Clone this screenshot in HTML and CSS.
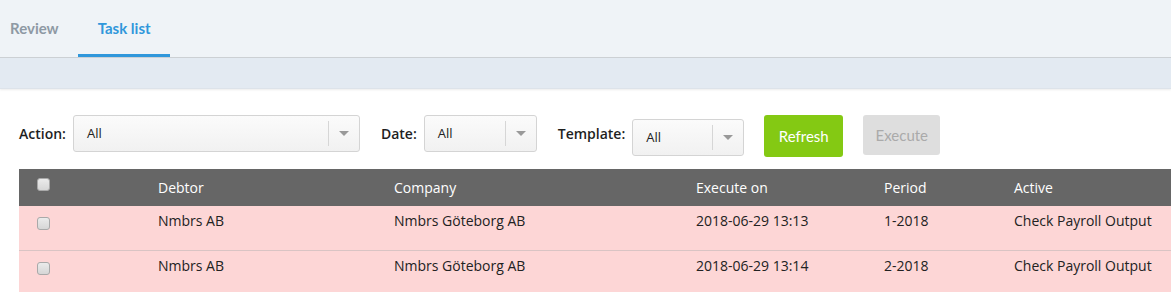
FILE: index.html
```html
<!DOCTYPE html>
<html>
<head>
<meta charset="utf-8">
<link rel="stylesheet" href="styles.css">
</head>
<body>
<div class="tabs">
  <div class="tab">Review</div>
  <div class="tab active">Task list</div>
</div>
<div class="band"></div>
<div class="content">
  <div class="filters">
    <label class="lbl">Action:</label>
    <div class="select w-action"><span class="val">All</span><span class="arrow"><i></i></span></div>
    <label class="lbl">Date:</label>
    <div class="select w-date"><span class="val">All</span><span class="arrow"><i></i></span></div>
    <label class="lbl">Template:</label>
    <div class="select w-tpl low"><span class="val">All</span><span class="arrow"><i></i></span></div>
    <button class="btn refresh">Refresh</button>
    <button class="btn execute">Execute</button>
  </div>
  <table class="grid">
    <colgroup>
      <col class="c-chk"><col class="c-debtor"><col class="c-company"><col class="c-exec"><col class="c-period"><col>
    </colgroup>
    <thead>
      <tr><th><span class="chk"></span></th><th>Debtor</th><th>Company</th><th>Execute on</th><th>Period</th><th>Active</th></tr>
    </thead>
    <tbody>
      <tr class="first"><td><span class="chk"></span></td><td>Nmbrs AB</td><td>Nmbrs Göteborg AB</td><td>2018-06-29 13:13</td><td>1-2018</td><td>Check Payroll Output</td></tr>
      <tr><td><span class="chk"></span></td><td>Nmbrs AB</td><td>Nmbrs Göteborg AB</td><td>2018-06-29 13:14</td><td>2-2018</td><td>Check Payroll Output</td></tr>
    </tbody>
  </table>
</div>
</body>
</html>
```
FILE: styles.css
```css
html, body { margin: 0; padding: 0; background: #fff; }
body { font-family: Lato, "Open Sans", sans-serif; color: #222; overflow: hidden; }

.tabs {
  height: 57px;
  background: #eff3f7;
  border-bottom: 1px solid #cdd1d5;
  display: flex;
}
.tab {
  font-size: 15px;
  font-weight: bold;
  color: #8e99a4;
  padding: 19px 10px 0 10px;
  box-sizing: border-box;
  height: 57px;
  margin-right: 9px;
}
.tab.active {
  color: #3097db;
  border-bottom: 3px solid #3097db;
  padding: 19px 19px 0 20px;
}
.band {
  height: 30px;
  background: #e3eaf2;
  box-shadow: 0 1px 2px rgba(0,0,0,0.08);
  border-bottom: 1px solid #dde3ea;
}

.content { padding: 26px 0 0 19px; }

.filters {
  display: flex;
  align-items: flex-start;
  height: 54px;
}
.lbl {
  font-family: "Open Sans", sans-serif;
  font-weight: 600;
  font-size: 14px;
  color: #1f1f1f;
  line-height: 37px;
  margin-right: 7px;
}
.select {
  height: 37px;
  box-sizing: border-box;
  border: 1px solid #d4d4d4;
  border-radius: 3px;
  background: linear-gradient(#fbfbfb, #f1f1f1);
  display: flex;
  align-items: stretch;
  margin-right: 21px;
}
.select .val {
  flex: 1;
  font-family: "Open Sans", sans-serif;
  font-size: 13px;
  color: #222;
  padding: 8px 0 0 13px;
}
.select .arrow {
  width: 30px;
  border-left: 1px solid #d6d6d6;
  margin: 5px 0;
  display: flex;
  align-items: center;
  justify-content: center;
}
.select .arrow i {
  width: 0; height: 0;
  border-left: 5px solid transparent;
  border-right: 5px solid transparent;
  border-top: 5px solid #999;
}
.w-action { width: 287px; }
.w-date { width: 113px; }
.w-tpl { width: 112px; }
.low { margin-top: 4px; }

.btn {
  font-family: Lato, sans-serif;
  font-size: 15px;
  border: none;
  border-radius: 3px;
  padding: 0;
  margin-right: 20px;
}
.refresh {
  width: 79px;
  height: 42px;
  background: #84c913;
  color: #fff;
  margin-left: -1px;
}
.execute {
  width: 77px;
  height: 40px;
  background: #dedede;
  color: #aaa;
}

.grid {
  border-collapse: collapse;
  table-layout: fixed;
  width: 100%;
  font-family: "Open Sans", sans-serif;
  font-size: 14px;
}
.c-chk { width: 139px; }
.c-debtor { width: 236px; }
.c-company { width: 302px; }
.c-exec { width: 188px; }
.c-period { width: 130px; }

.grid th {
  background: #666;
  color: #fff;
  font-weight: normal;
  text-align: left;
  height: 37px;
  padding: 0;
  vertical-align: middle;
}
.grid td {
  background: #fdd6d6;
  color: #222;
  padding: 5px 0 0 0;
  height: 36px;
  vertical-align: top;
}
.grid tbody tr.first td { border-bottom: 1px solid #d9c4c4; height: 39px; padding-top: 5px; }
.grid th:first-child, .grid td:first-child { padding-left: 18px; }
.chk {
  display: inline-block;
  width: 11px;
  height: 11px;
  border: 1px solid #a9a9a9;
  border-radius: 3px;
  background: linear-gradient(#ebebeb, #d6d6d6);
  vertical-align: middle;
}
.grid th .chk { margin-top: -10px; }
.grid td .chk { margin-top: 3px; }
```
